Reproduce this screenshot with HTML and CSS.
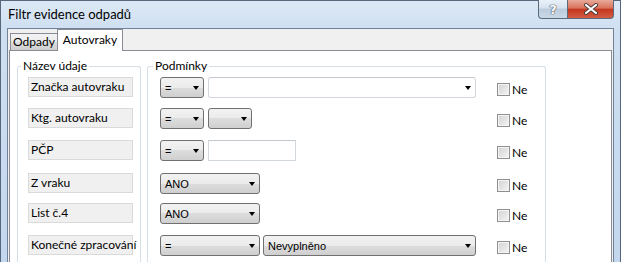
FILE: index.html
```html
<!DOCTYPE html>
<html lang="cs">
<head>
    <meta charset="UTF-8">
    <title>Filtr evidence odpadů</title>
    <link rel="stylesheet" href="styles.css">
</head>
<body>
    <div class="window">
        <div class="titlebar">
            <span class="title">Filtr evidence odpadů</span>
            <div class="caption-buttons">
                <div class="cap-btn help">?</div>
                <div class="cap-btn close">
                    <svg width="16" height="12" viewBox="0 0 16 12">
                        <path d="M3 2 L13 10 M13 2 L3 10" stroke="#4a3a38" stroke-width="4" stroke-linecap="round"/>
                        <path d="M3 2 L13 10 M13 2 L3 10" stroke="#fff" stroke-width="2.2" stroke-linecap="round"/>
                    </svg>
                </div>
            </div>
        </div>

        <div class="client">
            <div class="tabs">
                <div class="tab">Odpady</div>
                <div class="tab active">Autovraky</div>
            </div>

            <div class="tab-panel">
                <fieldset class="group names">
                    <legend>Název údaje</legend>
                    <div class="rows">
                        <div class="field">Značka autovraku</div>
                        <div class="field">Ktg. autovraku</div>
                        <div class="field">PČP</div>
                        <div class="field">Z vraku</div>
                        <div class="field">List č.4</div>
                        <div class="field">Konečné zpracování</div>
                    </div>
                </fieldset>

                <fieldset class="group conditions">
                    <legend>Podmínky</legend>
                    <div class="rows cond-rows">
                        <div class="controls">
                            <div class="combo w44">=<span class="arrow"></span></div>
                            <div class="textbox edit-combo"><span class="arrow"></span></div>
                        </div>
                        <label class="check"><span class="box"></span>Ne</label>

                        <div class="controls">
                            <div class="combo w44">=<span class="arrow"></span></div>
                            <div class="combo w44"><span class="arrow"></span></div>
                        </div>
                        <label class="check"><span class="box"></span>Ne</label>

                        <div class="controls">
                            <div class="combo w44">=<span class="arrow"></span></div>
                            <div class="textbox short"></div>
                        </div>
                        <label class="check"><span class="box"></span>Ne</label>

                        <div class="controls">
                            <div class="combo w100">ANO<span class="arrow"></span></div>
                        </div>
                        <label class="check"><span class="box"></span>Ne</label>

                        <div class="controls">
                            <div class="combo w100">ANO<span class="arrow"></span></div>
                        </div>
                        <label class="check"><span class="box"></span>Ne</label>

                        <div class="controls tight">
                            <div class="combo w100">=<span class="arrow"></span></div>
                            <div class="combo w213">Nevyplněno<span class="arrow"></span></div>
                        </div>
                        <label class="check"><span class="box"></span>Ne</label>
                    </div>
                </fieldset>
            </div>
        </div>
    </div>
</body>
</html>
```

FILE: styles.css
```css
body {
    margin: 0;
    overflow: hidden;
    font-family: Lato, "Noto Sans", sans-serif;
    font-size: 12px;
    color: #000;
    background: #c4d8ee;
}
.window {
    height: 262px;
    box-sizing: border-box;
    display: flex;
    flex-direction: column;
    border: 1px solid #56677b;
    border-bottom: none;
    background: linear-gradient(to bottom, #dce8f5, #cfdff1 30px, #c2d7ee);
}
.titlebar {
    height: 27px;
    flex: none;
    display: flex;
    justify-content: space-between;
    align-items: flex-start;
    padding-left: 7px;
}
.title {
    font-size: 13px;
    line-height: 27px;
    color: #000;
}
.caption-buttons {
    display: flex;
    margin-top: -1px;
    margin-right: 6px;
}
.cap-btn {
    height: 19px;
    box-sizing: border-box;
    border: 1px solid #5c6b7c;
    border-top: none;
    display: flex;
    align-items: center;
    justify-content: center;
}
.help {
    width: 29px;
    border-right: none;
    border-radius: 0 0 0 4px;
    background: linear-gradient(to bottom, #e9f0f8, #d6e2ef 45%, #bccbdc 50%, #cbd8e6);
    font-family: "DejaVu Sans", sans-serif;
    font-weight: bold;
    font-size: 13px;
    color: #fff;
    text-shadow: 0 0 1px #44505e, 0 0 1px #44505e, 0 0 1px #44505e;
}
.close {
    width: 47px;
    border-radius: 0 0 4px 0;
    background: linear-gradient(to bottom, #e8aa9a, #d9715a 45%, #c4371f 52%, #d25c42);
}
.client {
    flex: 1;
    display: flex;
    flex-direction: column;
    margin: 0 6px;
    border: 1px solid #6f8299;
    border-bottom: none;
    background: #f0f0f0;
}
.tabs {
    display: flex;
    align-items: flex-end;
    height: 21px;
    flex: none;
    margin-left: 2px;
    position: relative;
    z-index: 1;
}
.tab {
    height: 17px;
    width: 48px;
    box-sizing: border-box;
    border: 1px solid #898c95;
    border-bottom: none;
    background: linear-gradient(to bottom, #f3f3f3, #ebebeb 50%, #dddddd 50%, #cfcfcf);
    text-align: center;
    line-height: 16px;
}
.tab.active {
    height: 22px;
    width: 66px;
    margin-left: -1px;
    margin-bottom: -1px;
    background: #fff;
    line-height: 19px;
}
.tab-panel {
    flex: 1;
    margin: 0 1px;
    border: 1px solid #898c95;
    border-bottom: none;
    background: #fff;
    display: flex;
    gap: 6px;
    padding: 7px 0 0 7px;
}
.group {
    margin: 0;
    padding: 3px 0 0 10px;
    border: 1px solid #d5dfe5;
    border-bottom: none;
    border-radius: 3px 3px 0 0;
    box-sizing: border-box;
}
.group legend {
    padding: 0 2px;
    margin-left: -7px;
    line-height: 16px;
}
.names {
    width: 124px;
}
.conditions {
    width: 399px;
    padding-left: 12px;
}
.rows {
    display: grid;
    grid-template-rows: 31px 32px 33px 30px 32px 21px;
}
.field {
    width: 105px;
    height: 20px;
    box-sizing: border-box;
    border: 1px solid #dadada;
    background: #f0f0f0;
    padding-left: 2px;
    line-height: 18px;
    white-space: nowrap;
}
.cond-rows {
    grid-template-columns: 337px auto;
    align-items: start;
}
.controls {
    display: flex;
    gap: 4px;
}
.controls.tight {
    gap: 3px;
}
.combo {
    height: 21px;
    box-sizing: border-box;
    border: 1px solid #707070;
    border-radius: 3px;
    background: linear-gradient(to bottom, #f2f2f2, #ebebeb 50%, #dddddd 50%, #cfcfcf);
    display: flex;
    align-items: center;
    padding-left: 4px;
    font-family: "Liberation Sans", Arial, sans-serif;
    font-size: 11px;
}
.arrow {
    margin-left: auto;
    margin-right: 4px;
    width: 0;
    height: 0;
    border-left: 3.5px solid transparent;
    border-right: 3.5px solid transparent;
    border-top: 4px solid #000;
}
.w44 { width: 44px; }
.w100 { width: 100px; }
.w213 { width: 213px; }
.textbox {
    height: 21px;
    box-sizing: border-box;
    border: 1px solid #d3d7de;
    border-top-color: #c4c8cf;
    background: #fff;
    display: flex;
    align-items: center;
}
.edit-combo {
    width: 268px;
    border-radius: 3px;
}
.short {
    width: 88px;
}
.check {
    display: flex;
    align-items: center;
    gap: 2px;
    margin-top: 5px;
    font-size: 12px;
}
.box {
    width: 13px;
    height: 13px;
    box-sizing: border-box;
    border: 1px solid #8f8f8f;
    background: linear-gradient(135deg, #d2d2d2, #f4f4f4);
    box-shadow: inset 0 0 0 1px #f4f4f4;
}
```
